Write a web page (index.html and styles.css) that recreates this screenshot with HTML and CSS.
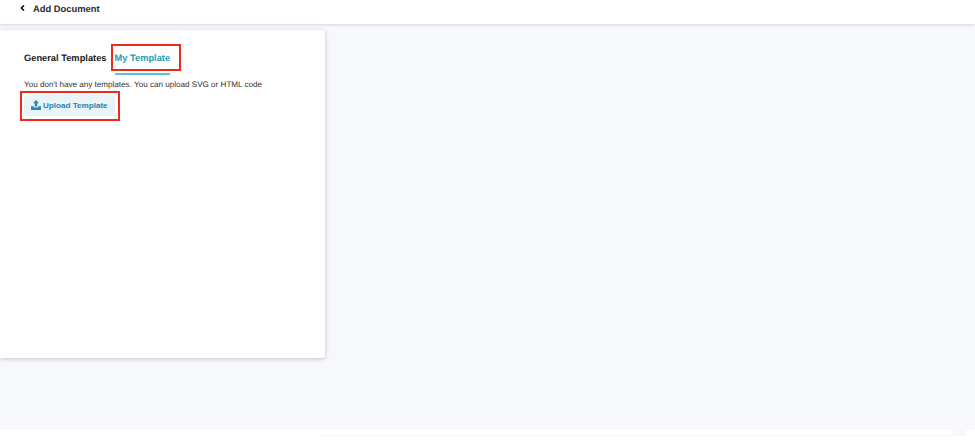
FILE: index.html
```html
<!DOCTYPE html>
<html lang="en">
  <head>
    <meta charset="UTF-8" />
    <title>Add Document</title>
    <link rel="stylesheet" href="styles.css">
  </head>
  <body>
    <header class="topbar">
      <svg class="back" width="5" height="6" viewBox="0 0 5 6"><path d="M4 .5 1.4 3 4 5.5" fill="none" stroke="#111" stroke-width="1.6"/></svg>
      <span class="title">Add Document</span>
    </header>
    <main class="content">
      <section class="card">
        <div class="tabs">
          <span class="tab">General Templates</span>
          <span class="tab active">My Template<i class="mark mark-tab"></i></span>
        </div>
        <p class="note">You don't have any templates. You can upload SVG or HTML code</p>
        <button class="upload">
          <svg width="10" height="10" viewBox="0 0 10 10"><path d="M5 0 8 3.2H6.2V6.6H3.8V3.2H2zM0 6.2H2.8V7.6H7.2V6.2H10V10H0z" fill="#2a86ab"/></svg>
          <span>Upload Template</span>
          <i class="mark mark-btn"></i>
        </button>
      </section>
    </main>
    <footer class="bottom">
      <div class="strip"></div>
      <div class="notch"></div>
    </footer>
  </body>
</html>
```

FILE: styles.css
```css
* {
  box-sizing: border-box;
}

html,
body {
  height: 100%;
}

body {
  margin: 0;
  height: 444px;
  overflow: hidden;
  display: flex;
  flex-direction: column;
  background-color: #f7f8fc;
  font-family: "Liberation Sans", Arial, sans-serif;
  text-rendering: geometricPrecision;
}

.topbar {
  height: 24px;
  flex: none;
  display: flex;
  align-items: flex-start;
  padding: 5px 0 0 20px;
  background-color: #fff;
  box-shadow: 0 1px 3px rgba(60, 60, 80, 0.18);
}

.title {
  margin: 1px 0 0 8px;
  font-size: 9.4px;
  line-height: 6px;
  font-weight: 700;
  color: #2b2b2b;
}

.content {
  flex: 1;
  padding-top: 6px;
}

.card {
  width: 325px;
  height: 328px;
  padding: 20px 24px 0;
  background-color: #fff;
  border-radius: 0 3px 3px 0;
  box-shadow: 0 1px 4px rgba(60, 60, 90, 0.28);
}

.tabs {
  display: flex;
  gap: 8px;
  height: 24px;
}

.tab {
  position: relative;
  font-size: 9.3px;
  line-height: 17px;
  font-weight: 700;
  color: #1c1c1c;
}

.tab.active {
  color: #22a0b3;
}

/* underline of the active tab */
.tab.active::after {
  content: "";
  position: absolute;
  left: 0;
  right: 0;
  top: 23px;
  height: 2px;
  background-color: #55c3d2;
}

.note {
  margin: 5px 0 0;
  font-size: 8.1px;
  line-height: 11px;
  color: #333;
}

.upload {
  position: relative;
  display: flex;
  align-items: center;
  gap: 2px;
  width: 91px;
  height: 21px;
  margin-top: 5px;
  padding: 0 0 1px 7px;
  border: 0;
  border-radius: 4px;
  background-color: #e9f3f8;
  font-family: inherit;
  font-size: 8.1px;
  font-weight: 700;
  color: #2a86ab;
}

/* red annotation boxes drawn over the screenshot */
.mark {
  position: absolute;
  border: 2px solid #ee2a1c;
  pointer-events: none;
}

.mark-tab {
  left: -4px;
  top: -6px;
  width: 70px;
  height: 27px;
}

.mark-btn {
  left: -4px;
  top: -4px;
  width: 100px;
  height: 30px;
}

.bottom {
  height: 14px;
  flex: none;
  display: flex;
  align-items: flex-start;
  padding-left: 319px;
  background-color: #fff;
}

.strip {
  width: 634px;
  height: 6px;
  border-bottom: 1px solid #f6f7fb;
}

.notch {
  width: 13px;
  height: 6px;
  background-color: #f7f8fc;
}
```
